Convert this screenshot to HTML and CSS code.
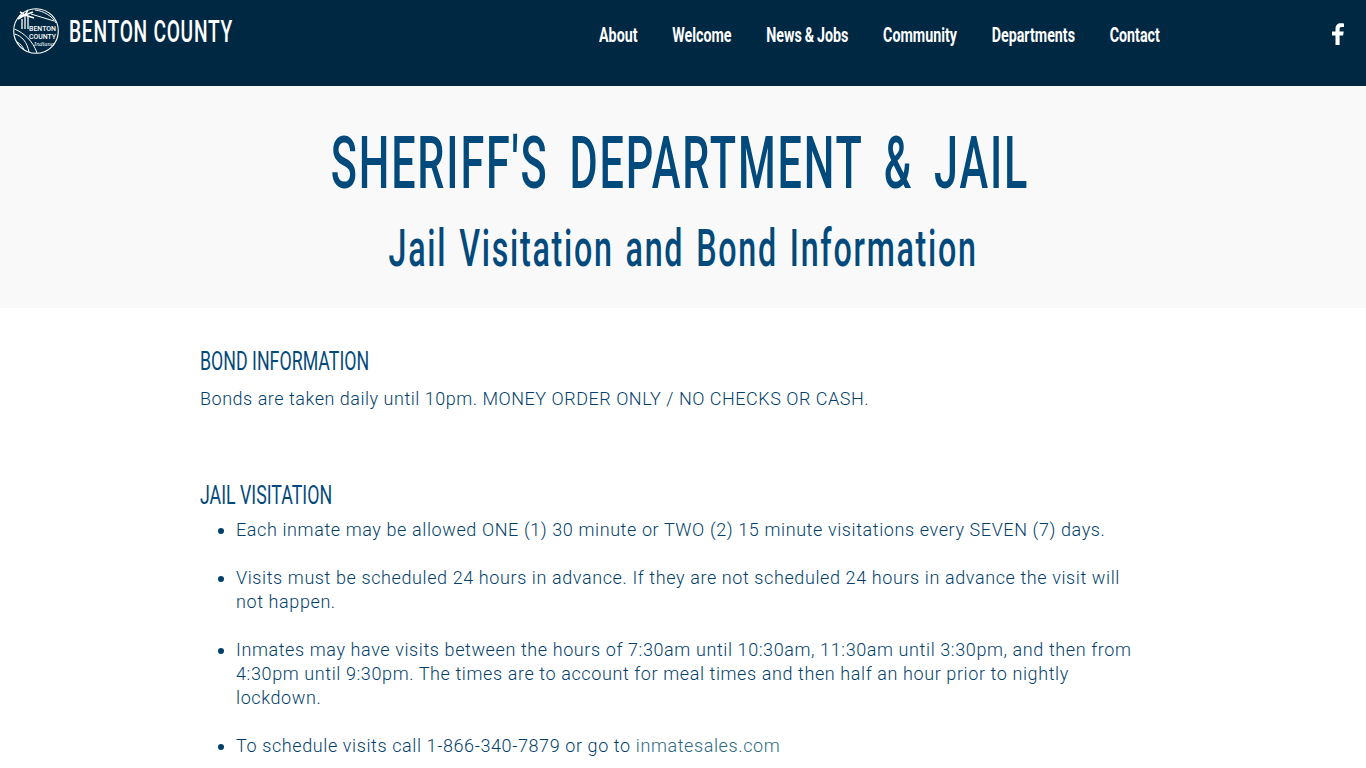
FILE: index.html
```html
<!DOCTYPE html>
<html lang="en">
  <head>
    <meta charset="UTF-8" />
    <meta name="viewport" content="width=device-width, initial-scale=1.0" />
    <title>Benton County - Sheriff's Department &amp; Jail</title>
    <link rel="stylesheet" href="styles.css">
  </head>
  <body>
    <header class="site-header">
      <a class="brand" href="#">
        <svg class="brand-logo" viewBox="0 0 46 46" width="46" height="46" fill="none" stroke="#fff">
          <circle cx="23" cy="23" r="22.300" stroke-width="1.100" />
          <path d="M12 7 V21 M15 8 V21 M9 11 V21" stroke-width="1.300" />
          <path d="M12 7 L5 11 M12 7 L7 4 M12 7 L15 2 M12 7 L20 4 M12 7 L21 10 M12 7 L6 8" stroke-width="1.500" />
          <path d="M22 2 C31 3 39 8 43 15 M18 6 L41 13 M1.500 26 C9 28 14 34 16 44 M1.500 21 C11 25 20 33 24 45 M4 34 C8 36 10 39 11 42" stroke-width="1" />
          <text x="29.500" y="22.500" textLength="27" lengthAdjust="spacingAndGlyphs" class="logo-text">BENTON</text>
          <text x="29.500" y="30.500" textLength="27" lengthAdjust="spacingAndGlyphs" class="logo-text">COUNTY</text>
          <text x="31" y="37.500" textLength="20" lengthAdjust="spacingAndGlyphs" class="logo-script">Indiana</text>
        </svg>
        <span class="brand-name">BENTON COUNTY</span>
      </a>
      <div class="nav-wrap">
        <nav class="main-nav">
          <a href="#">About</a>
          <a href="#">Welcome</a>
          <a href="#">News &amp; Jobs</a>
          <a href="#">Community</a>
          <a href="#">Departments</a>
          <a href="#">Contact</a>
        </nav>
      </div>
      <a class="social" href="#" aria-label="Facebook">
        <svg viewBox="0 0 12 22" width="12" height="22" fill="#fff">
          <path d="M3.500 22V12.400H0V8.500H3.500V5.600C3.500 2.100 5.600 0.200 8.700 0.200C10.200 0.200 11.500 0.300 12 0.400V4H9.700C8 4 7.600 4.800 7.600 6V8.500H11.700L11.100 12.400H7.600V22Z" />
        </svg>
      </a>
    </header>

    <section class="page-title">
      <h1>SHERIFF'S DEPARTMENT &amp; JAIL</h1>
      <h2>Jail Visitation and Bond Information</h2>
    </section>

    <main class="content">
      <h3>BOND INFORMATION</h3>
      <p class="bond-text">Bonds are taken daily until 10pm. MONEY ORDER ONLY / NO CHECKS OR CASH.</p>

      <h3 class="visit-title">JAIL VISITATION</h3>
      <ul class="visit-list">
        <li>Each inmate may be allowed ONE (1) 30 minute or TWO (2) 15 minute visitations every SEVEN (7) days.</li>
        <li>Visits must be scheduled 24 hours in advance. If they are not scheduled 24 hours in advance the visit will not happen.</li>
        <li>Inmates may have visits between the hours of 7:30am until 10:30am, 11:30am until 3:30pm, and then from 4:30pm until 9:30pm. The times are to account for meal times and then half an hour prior to nightly lockdown.</li>
        <li>To schedule visits call 1-866-340-7879 or go to <a href="#">inmatesales.com</a></li>
      </ul>
    </main>
  </body>
</html>
```

FILE: styles.css
```css
* {
  margin: 0;
  padding: 0;
  box-sizing: border-box;
}
html,
body {
  height: 768px;
  overflow: hidden;
}
body {
  background-color: #fff;
  color: #034a7c;
  font-family: "Roboto", sans-serif;
}
a {
  color: inherit;
  text-decoration: none;
}
.site-header {
  display: flex;
  align-items: flex-start;
  height: 86px;
  background-color: #012842;
  color: #fff;
}
.brand {
  display: flex;
  flex: none;
  align-items: center;
  gap: 10px;
  width: 599px;
  padding: 8px 0 0 13px;
}
.brand-logo {
  flex: none;
  overflow: visible;
}
.logo-text {
  fill: #fff;
  stroke: none;
  font-size: 8px;
  font-weight: 500;
  text-anchor: middle;
}
.logo-script {
  fill: #fff;
  stroke: none;
  font-family: "Liberation Serif", serif;
  font-size: 7px;
  font-style: italic;
  text-anchor: middle;
}
.brand-name {
  font-size: 32px;
  font-weight: 500;
  letter-spacing: 1.2px;
  white-space: nowrap;
  transform: scaleX(0.6);
  transform-origin: left;
}
.nav-wrap {
  flex: 1;
  min-width: 0;
  padding-top: 22px;
}
.main-nav {
  display: flex;
  gap: 51px;
  width: 1000px;
  font-size: 21px;
  font-weight: 700;
  line-height: 26px;
  word-spacing: -1px;
  white-space: nowrap;
  transform: scaleX(0.68);
  transform-origin: left;
}
.social {
  flex: none;
  margin: 23px 22px 0 0;
}
.page-title {
  display: flex;
  flex-direction: column;
  align-items: center;
  height: 222px;
  padding-top: 38px;
  background-color: #f9f9f9;
  white-space: nowrap;
}
.page-title h1 {
  margin-right: 7px;
  font-size: 72px;
  font-weight: 500;
  line-height: 80px;
  letter-spacing: 3px;
  word-spacing: 14px;
  transform: scaleX(0.6);
}
.page-title h2 {
  margin-top: 15px;
  font-size: 52px;
  font-weight: 500;
  line-height: 60px;
  letter-spacing: 2.800px;
  word-spacing: 3.500px;
  transform: scaleX(0.62);
}
.content {
  width: 966px;
  margin-left: 200px;
  padding-top: 37px;
}
.content h3 {
  font-size: 26px;
  font-weight: 400;
  line-height: 32px;
  white-space: nowrap;
  transform: scaleX(0.684);
  transform-origin: left;
}
.bond-text,
.visit-list {
  color: #033f6b;
  font-size: 18px;
  font-weight: 300;
  line-height: 24px;
  letter-spacing: 0.6px;
}
.bond-text {
  margin-top: 10px;
  letter-spacing: 0.52px;
}
.content .visit-title {
  margin-top: 68px;
}
.visit-list {
  margin-top: 7px;
  padding-left: 36px;
  padding-right: 16px;
}
.visit-list li {
  margin-bottom: 24px;
}
.visit-list a {
  color: #2c6a80;
}
```
